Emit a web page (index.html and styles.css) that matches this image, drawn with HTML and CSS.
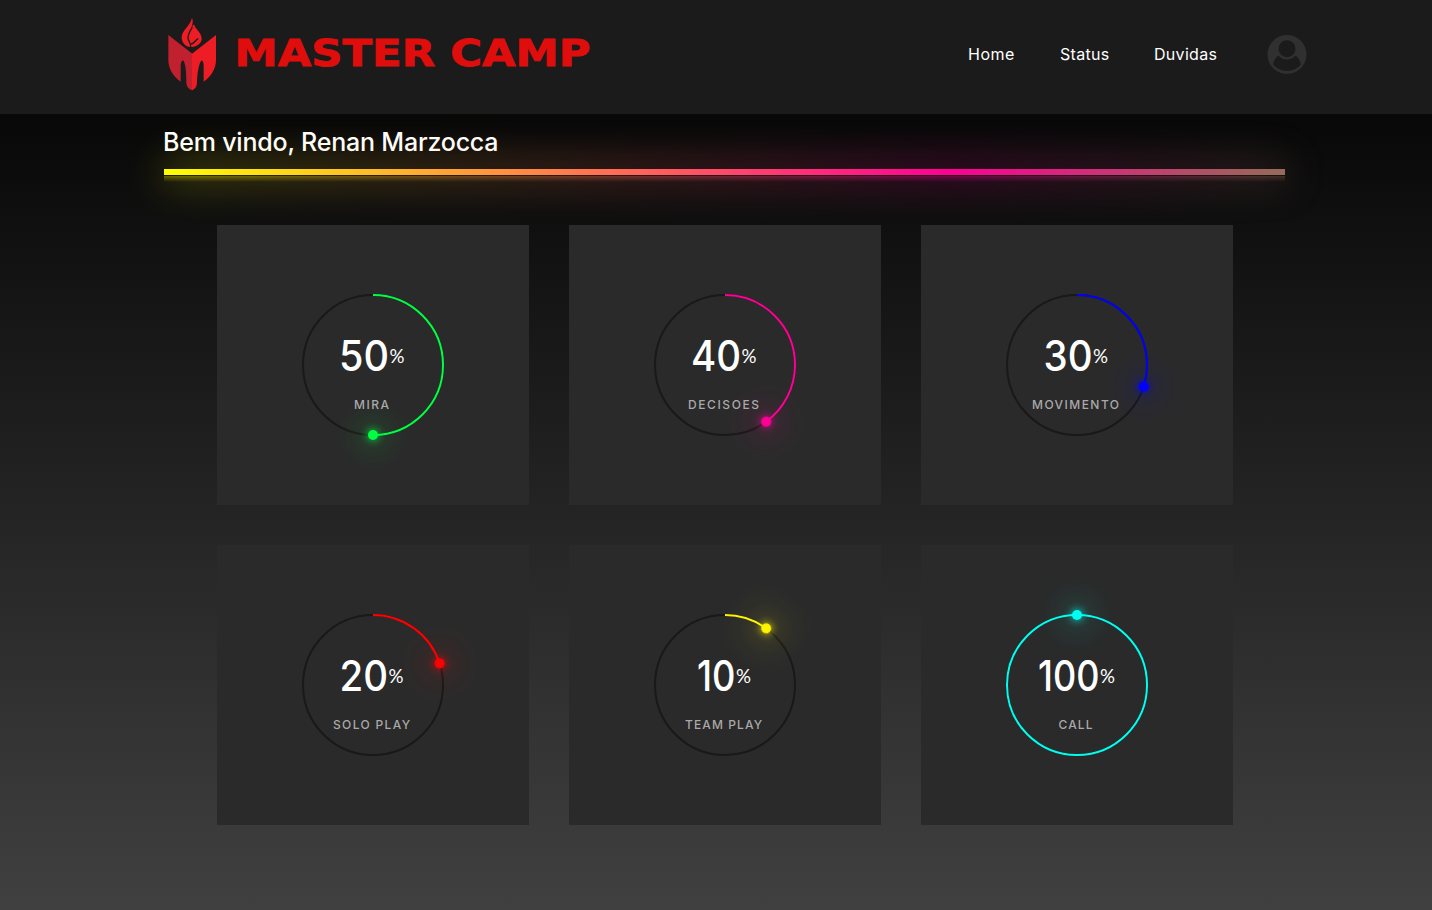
FILE: index.html
```html
<!DOCTYPE html>
<html lang="pt-BR">
<head>
<meta charset="utf-8">
<title>Master Camp</title>
<link rel="stylesheet" href="styles.css">
</head>
<body>
<header class="header">
  <a class="brand">
    <svg class="emblem" viewBox="0 0 225 276">
      <path fill="#c1202f" d="M40 81 112 137V247C101 244 95 237 94 226C94 195 92 165 84 157Q77 160 77 176V221C53 203 40 181 40 155Z"/>
      <path fill="#ee1c25" d="M183 81 111 137V247C120 244 125 237 126 226C126 195 132 165 140 157Q146 160 146 176V221C170 203 183 181 183 155Z"/>
      <path fill="#ee1c25" d="M111 29C115 39 113 46 110 57L117 49C121 65 141 74 140 93C139 107 126 116 111 117H103C89 114 80 103 80 88C80 67 106 54 111 29Z"/>
      <path fill="none" stroke="#1b1b1b" stroke-width="4" d="M112 56C108 68 98 76 99 90C100 100 108 104 107 118"/>
      <path fill="none" stroke="#1b1b1b" stroke-width="4" d="M108 108C119 107 122 94 130 92"/>
    </svg>
    <svg class="wordmark" viewBox="0 0 370 60">
      <text class="wordmark-text" x="4.500" y="41" textLength="356" lengthAdjust="spacingAndGlyphs">MASTER CAMP</text>
    </svg>
  </a>
  <nav class="nav">
    <a class="nav-home">Home</a>
    <a class="nav-status">Status</a>
    <a class="nav-faq">Duvidas</a>
    <svg class="user" viewBox="0 0 40 40">
      <circle cx="20" cy="19.500" r="19.500" fill="#303030"/>
      <circle cx="20" cy="13.700" r="8.500" fill="#1b1b1b"/>
      <path fill="#1b1b1b" d="M11.500 20.500Q15 24.500 20 24.500T28.500 20.500Q33 23.500 33.800 29.500Q28.500 36 20 36T6.200 29.500Q7 23.500 11.500 20.500Z"/>
    </svg>
  </nav>
</header>
<main class="main">
  <h1 class="welcome">Bem vindo, Renan Marzocca</h1>
  <div class="neon"></div>
  <section class="cards">
    <article class="card green"><svg class="dial" viewBox="0 0 150 150">
      <circle class="track" cx="75" cy="75" r="70"/><circle class="arc" cx="75" cy="75" r="70" pathLength="100" stroke-dasharray="50 50"/>
      <circle class="dot" cx="75" cy="5" r="5" transform="rotate(180 75 75)"/>
      <text class="value" x="41" y="81" textLength="50" lengthAdjust="spacingAndGlyphs">50</text><text class="unit" x="91.500" y="73" textLength="15" lengthAdjust="spacingAndGlyphs">%</text>
      <text class="label" x="56" y="119" textLength="35">MIRA</text>
    </svg></article>
    <article class="card pink"><svg class="dial" viewBox="0 0 150 150">
      <circle class="track" cx="75" cy="75" r="70"/><circle class="arc" cx="75" cy="75" r="70" pathLength="100" stroke-dasharray="40 60"/>
      <circle class="dot" cx="75" cy="5" r="5" transform="rotate(144 75 75)"/>
      <text class="value" x="41" y="81" textLength="50" lengthAdjust="spacingAndGlyphs">40</text><text class="unit" x="91.500" y="73" textLength="15" lengthAdjust="spacingAndGlyphs">%</text>
      <text class="label" x="38" y="119" textLength="71">DECISOES</text>
    </svg></article>
    <article class="card blue"><svg class="dial" viewBox="0 0 150 150">
      <circle class="track" cx="75" cy="75" r="70"/><circle class="arc" cx="75" cy="75" r="70" pathLength="100" stroke-dasharray="30 70"/>
      <circle class="dot" cx="75" cy="5" r="5" transform="rotate(108 75 75)"/>
      <text class="value" x="41.500" y="81" textLength="49" lengthAdjust="spacingAndGlyphs">30</text><text class="unit" x="91" y="73" textLength="15" lengthAdjust="spacingAndGlyphs">%</text>
      <text class="label" x="30" y="119" textLength="87">MOVIMENTO</text>
    </svg></article>
    <article class="card red"><svg class="dial" viewBox="0 0 150 150">
      <circle class="track" cx="75" cy="75" r="70"/><circle class="arc" cx="75" cy="75" r="70" pathLength="100" stroke-dasharray="20 80"/>
      <circle class="dot" cx="75" cy="5" r="5" transform="rotate(72 75 75)"/>
      <text class="value" x="41.500" y="81" textLength="48.500" lengthAdjust="spacingAndGlyphs">20</text><text class="unit" x="90.500" y="73" textLength="15" lengthAdjust="spacingAndGlyphs">%</text>
      <text class="label" x="35" y="119" textLength="77">SOLO PLAY</text>
    </svg></article>
    <article class="card yellow"><svg class="dial" viewBox="0 0 150 150">
      <circle class="track" cx="75" cy="75" r="70"/><circle class="arc" cx="75" cy="75" r="70" pathLength="100" stroke-dasharray="10 90"/>
      <circle class="dot" cx="75" cy="5" r="5" transform="rotate(36 75 75)"/>
      <text class="value" x="47" y="81" textLength="38.500" lengthAdjust="spacingAndGlyphs">10</text><text class="unit" x="86" y="73" textLength="15" lengthAdjust="spacingAndGlyphs">%</text>
      <text class="label" x="35" y="119" textLength="77">TEAM PLAY</text>
    </svg></article>
    <article class="card cyan"><svg class="dial" viewBox="0 0 150 150">
      <circle class="track" cx="75" cy="75" r="70"/><circle class="arc" cx="75" cy="75" r="70"/>
      <circle class="dot" cx="75" cy="5" r="5"/>
      <text class="value" x="36" y="81" textLength="61.500" lengthAdjust="spacingAndGlyphs">100</text><text class="unit" x="98" y="73" textLength="15" lengthAdjust="spacingAndGlyphs">%</text>
      <text class="label" x="56.500" y="119" textLength="34">CALL</text>
    </svg></article>
  </section>
</main>
</body>
</html>
```
FILE: styles.css
```css
* { box-sizing: border-box; }
body {
  margin: 0;
  min-height: 910px;
  background: linear-gradient(#000, #404040);
  font-family: Inter, "Open Sans", sans-serif;
  color: #fff;
  overflow: hidden;
}
.header {
  position: relative;
  z-index: 1;
  display: flex;
  justify-content: space-between;
  height: 114px;
  padding: 8px 125px 0 155px;
  background: #1b1b1b;
}
.brand { display: flex; }
.emblem { width: 75px; height: 92px; }
.wordmark { width: 370px; height: 60px; margin-top: 17px; }
.wordmark-text {
  font: bold 37px "DejaVu Sans", sans-serif;
  fill: #e00d0d;
  stroke: #e00d0d;
  stroke-width: 0.8px;
}
.nav {
  display: flex;
  align-items: center;
  height: 93px;
  font-size: 16px;
  font-weight: 400;
}
.nav a { padding-bottom: 2px; }
.nav-home { width: 92px; letter-spacing: 0.5px; }
.nav-status { width: 94px; letter-spacing: 0.3px; }
.nav-faq { width: 113px; letter-spacing: 0.3px; }
.user { width: 40px; height: 40px; }
.main { padding: 0 147px 0 164px; }
.welcome {
  margin: 0;
  height: 55px;
  line-height: 56px;
  font-size: 25px;
  font-weight: 500;
  letter-spacing: -0.2px;
  text-indent: -1px;
  white-space: nowrap;
}
.neon {
  position: relative;
  height: 6px;
  background: linear-gradient(90deg, #ff0, #ff0095 70%, #966c57);
  -webkit-box-reflect: below 1px linear-gradient(transparent, #0005);
}
.neon::before {
  content: "";
  position: absolute;
  inset: 0;
  background: inherit;
  filter: blur(20px);
}
.cards {
  display: grid;
  grid-template-columns: repeat(3, 312px);
  gap: 40px;
  margin: 50px 0 0 53px;
}
.card {
  position: relative;
  display: flex;
  align-items: center;
  justify-content: center;
  height: 280px;
  background: #2a2a2a;
}
.dial { width: 150px; height: 150px; overflow: visible; }
.track, .arc { fill: none; stroke: #191919; stroke-width: 2px; }
.arc { stroke: var(--tone); transform: rotate(-90deg); transform-origin: 75px 75px; }
.dot {
  fill: var(--tone);
  filter: drop-shadow(0 0 4px var(--tone)) drop-shadow(0 0 16px var(--tone));
}
.value { font-size: 42px; font-weight: 500; fill: #fff; }
.unit { font: 400 20px Lato, sans-serif; fill: #fff; }
.label { font-size: 12px; font-weight: 500; fill: #a9a9a9; }
.green { --tone: #00ff43; }
.pink { --tone: #ff0095; }
.blue { --tone: #0000ff; }
.red { --tone: #ff0000; }
.yellow { --tone: #fff500; }
.cyan { --tone: #00fff0; }
```
